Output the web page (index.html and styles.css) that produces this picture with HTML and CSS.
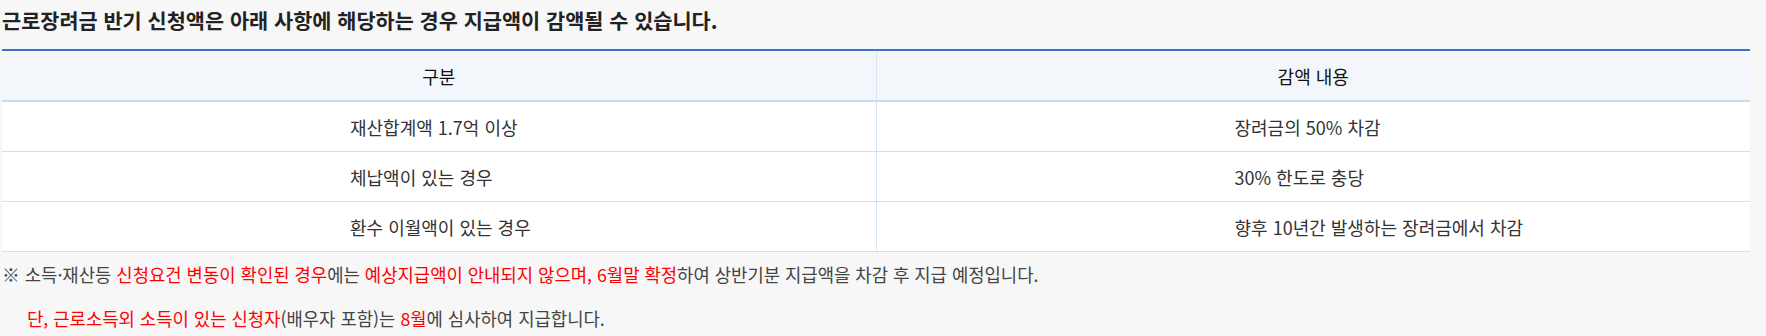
FILE: index.html
```html
<!DOCTYPE html>
<html lang="ko">
<head>
<meta charset="utf-8">
<link rel="stylesheet" href="styles.css">
</head>
<body>
<div class="wrap">
  <h3 class="title">근로장려금 반기 신청액은 아래 사항에 해당하는 경우 지급액이 감액될 수 있습니다.</h3>
  <table class="tbl">
    <thead>
      <tr><th>구분</th><th>감액 내용</th></tr>
    </thead>
    <tbody>
      <tr><td class="c1">재산합계액 1.7억 이상</td><td class="c2">장려금의 50% 차감</td></tr>
      <tr><td class="c1">체납액이 있는 경우</td><td class="c2">30% 한도로 충당</td></tr>
      <tr><td class="c1">환수 이월액이 있는 경우</td><td class="c2">향후 10년간 발생하는 장려금에서 차감</td></tr>
    </tbody>
  </table>
  <p class="note">※ 소득·재산등 <span class="red">신청요건 변동이 확인된 경우</span>에는 <span class="red">예상지급액이 안내되지 않으며, 6월말 확정</span>하여 상반기분 지급액을 차감 후 지급 예정입니다.</p>
  <p class="note indent"><span class="red">단, 근로소득외 소득이 있는 신청자</span>(배우자 포함)는 <span class="red">8월</span>에 심사하여 지급합니다.</p>
</div>
</body>
</html>
```
FILE: styles.css
```css
html, body {
  margin: 0;
  padding: 0;
  background: #f7f7f7;
}
body {
  font-family: "Noto Sans CJK KR", "Noto Sans", sans-serif;
  color: #333;
}
.wrap {
  width: 1748px;
  padding: 0 2px;
}
.title {
  margin: 0;
  height: 49px;
  padding-top: 6px;
  box-sizing: border-box;
  font-size: 20.8px;
  line-height: 28px;
  font-weight: 700;
  color: #222;
}
.tbl {
  width: 1748px;
  border-collapse: collapse;
  table-layout: fixed;
  border-top: 2px solid #3f72c4;
}
.tbl th, .tbl td {
  height: 49px;
  padding: 0;
  border-bottom: 1px solid #cfdff2;
  font-size: 18px;
}
.tbl th + th, .tbl td + td {
  border-left: 1px solid #d6e4f4;
}
.tbl th {
  text-align: center;
  background: #f3f7fb;
  color: #111;
  font-weight: 400;
  border-bottom: 2px solid #c9ddf2;
}
.tbl td {
  text-align: left;
  background: #fff;
  color: #333;
}
.tbl .c1 {
  padding-left: 348px;
}
.tbl .c2 {
  padding-left: 358px;
}
.note {
  margin: 0;
  font-size: 17.75px;
  line-height: 44px;
  color: #444;
}
.indent {
  padding-left: 25px;
}
.red {
  color: #ff0000;
}
```
